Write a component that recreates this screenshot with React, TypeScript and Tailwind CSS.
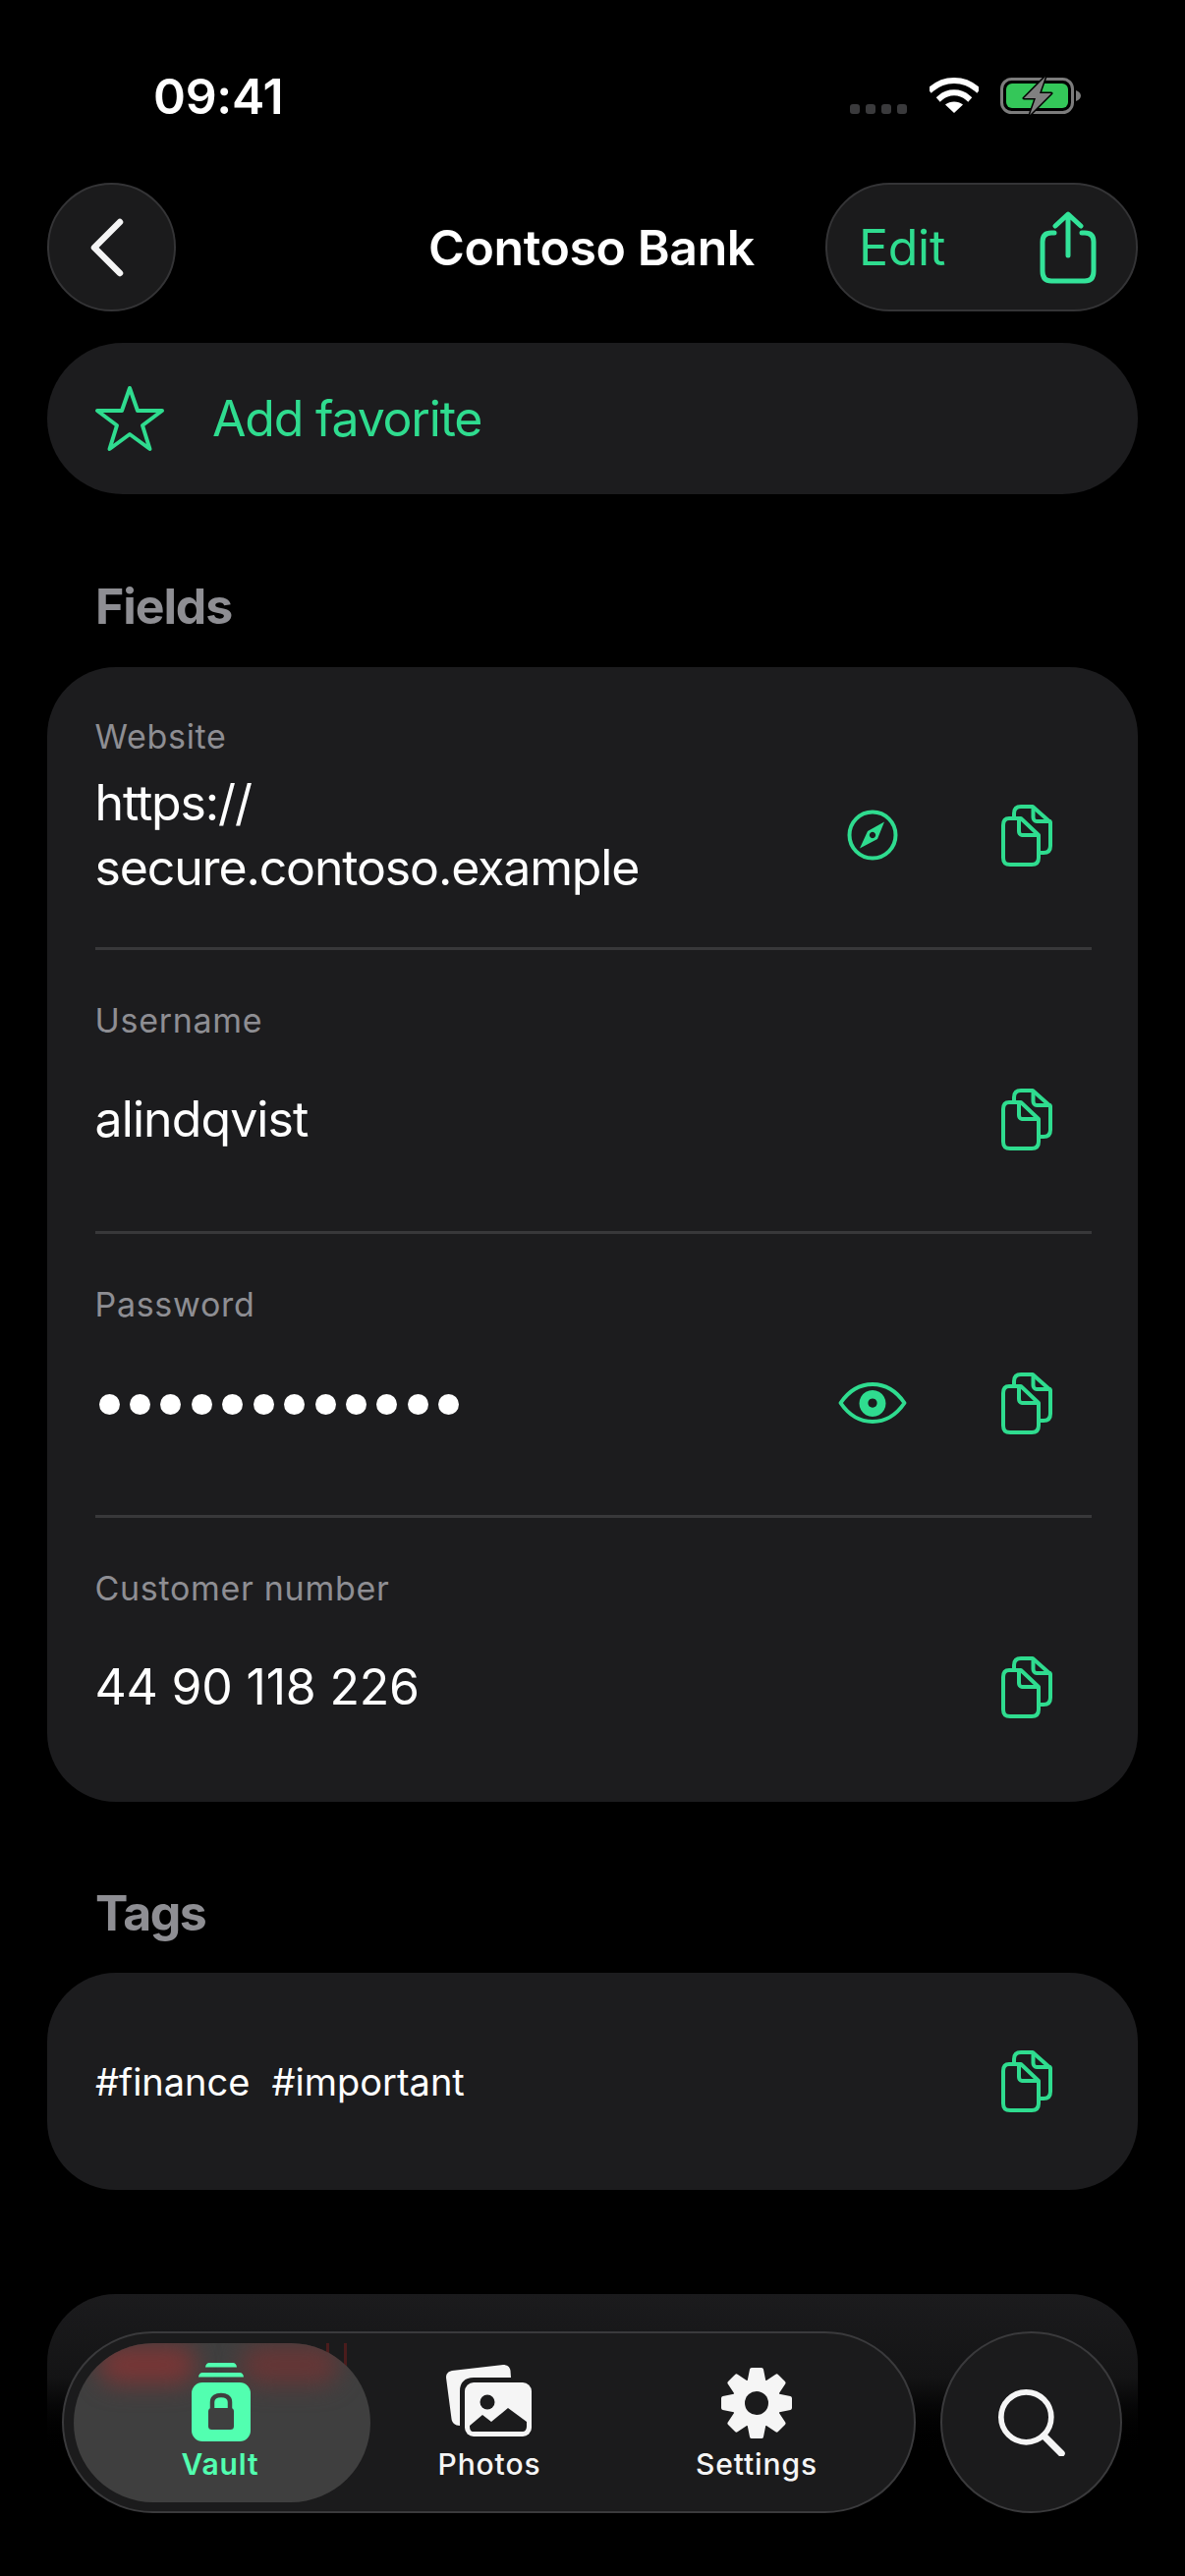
const accent = "#2fdc8f";

const CopyIcon = () => (
  <svg width="52" height="63" viewBox="0 0 52 63" fill="none" stroke="#2fdc8f" strokeWidth="4" strokeLinejoin="round" strokeLinecap="round">
    <path d="M13 13V9C13 4 16 2 20 2H32L50 18V42C50 47 47 49 43 49H38" />
    <path d="M32.500 3V13C32.500 15 34 17 36 17H49.500" />
    <path d="M8 14H20L38 31V54C38 59 35 61 31 61H9C4 61 2 59 2 54V21C2 16 4 14 8 14Z" />
    <path d="M18 14.500V27C18 29 19 31 21 31H37" />
  </svg>
);

const CompassIcon = () => (
  <svg width="52" height="52" viewBox="0 0 52 52" fill="none">
    <circle cx="26" cy="26" r="23.500" stroke="#2fdc8f" strokeWidth="4" />
    <path fillRule="evenodd" fill="#2fdc8f" d="M38 12.500L31 30L13 39.500L21 22ZM26 22.800a3.200 3.200 0 1 0 0.010 0Z" />
  </svg>
);

const EyeIcon = () => (
  <svg width="70" height="44" viewBox="0 0 70 44" fill="none">
    <path d="M2.500 22C11 9.500 22 3 35 3S59 9.500 67.500 22C59 34.500 48 41 35 41S11 34.500 2.500 22Z" stroke="#2fdc8f" strokeWidth="4" strokeLinejoin="round" />
    <path fillRule="evenodd" fill="#2fdc8f" d="M35 9a13.500 13.500 0 1 1 -0.010 0ZM35 17.500a4.600 4.600 0 1 0 0.010 0Z" />
  </svg>
);

const Row = ({ label, children, icon, last }: { label: string; children: React.ReactNode; icon?: React.ReactNode; last?: boolean }) => (
  <div className={`h-[289px] pt-[49.500px] ${last ? "" : "border-b-[3px] border-[#38383a]"}`}>
    <div className="text-[34px] leading-[46px] text-[#8e8e93] tracking-[0.700px]">{label}</div>
    <div className="h-[154px] flex items-center">
      <div className="flex-1 text-[50px] leading-[66px] text-white tracking-[-1.150px]">{children}</div>
      {icon && <div className="w-[70px] flex justify-center mr-[96px]">{icon}</div>}
      <div className="mr-[40px] flex"><CopyIcon /></div>
    </div>
  </div>
);

const App = () => {
  return (
    <div className="relative w-[1206px] h-[2622px] bg-black overflow-hidden font-['Inter',sans-serif]">
      {/* status bar */}
      <div className="h-[186px] pt-[71px] pl-[156px] pr-[106px] flex items-start justify-between">
        <span className="text-[50px] leading-[54px] font-semibold text-white tracking-[-0.300px]">09:41</span>
        <div className="flex items-start pt-[7px]">
          <div className="flex gap-[6px] mt-[28px] mr-[23px]">
            <div className="w-[10px] h-[10px] rounded-[3px] bg-[#3a3a3c]" />
            <div className="w-[10px] h-[10px] rounded-[3px] bg-[#3a3a3c]" />
            <div className="w-[10px] h-[10px] rounded-[3px] bg-[#3a3a3c]" />
            <div className="w-[10px] h-[10px] rounded-[3px] bg-[#3a3a3c]" />
          </div>
          <svg width="50" height="37" viewBox="0 0 50 37" fill="none" className="mr-[22px]">
            <path d="M2 12.500C15 1 35 1 48 12.500" stroke="#fff" strokeWidth="6" strokeLinecap="square" />
            <path d="M11 21.500C19 14.500 31 14.500 39 21.500" stroke="#fff" strokeWidth="6" strokeLinecap="square" />
            <path d="M25 37L16 28.500C21 24.500 29 24.500 34 28.500Z" fill="#fff" />
          </svg>
          <svg width="82" height="39" viewBox="0 0 82 39" fill="none">
            <rect x="1.500" y="2.500" width="72" height="34" rx="10" stroke="#7c7c7c" strokeWidth="3" />
            <rect x="6" y="7" width="63" height="25" rx="6" fill="#34c759" />
            <path d="M77 14C80 15 82 17 82 19.500C82 22 80 24 77 25Z" fill="#7c7c7c" />
            <path d="M46 0L24 22H36L30 39L52 17H40Z" fill="#808080" stroke="#000" strokeWidth="3" strokeLinejoin="round" paintOrder="stroke" />
          </svg>
        </div>
      </div>

      <div className="px-[48px]">
        {/* nav */}
        <div className="relative flex items-center justify-between h-[131px]">
          <button className="w-[131px] h-[131px] rounded-full bg-[#1b1b1c] border-2 border-[#343436] flex items-center justify-center">
            <svg width="38" height="60" viewBox="0 0 38 60" fill="none" className="mr-[10px]">
              <path d="M32 4L6 30L32 56" stroke="#f5f5f5" strokeWidth="6.500" strokeLinecap="round" strokeLinejoin="round" />
            </svg>
          </button>
          <span className="absolute left-[388px] text-[50px] leading-[60px] font-semibold text-white tracking-[-0.400px]">Contoso Bank</span>
          <div className="w-[318px] h-[131px] rounded-full bg-[#1b1b1c] border-2 border-[#343436] flex items-center justify-between pl-[32px] pr-[40px]">
            <span className="text-[50px] leading-[60px] text-[#2fdc8f] tracking-[-0.300px]">Edit</span>
            <svg width="58" height="74" viewBox="0 0 58 74" fill="none" stroke="#33e399" strokeWidth="5" strokeLinecap="round" strokeLinejoin="round">
              <path d="M29 45V4M16 15L29 3L42 15" />
              <path d="M15 22H12C6 22 3 25 3 31V61C3 68 6 71 12 71H46C52 71 55 68 55 61V31C55 25 52 22 46 22H43" />
            </svg>
          </div>
        </div>

        {/* favorite */}
        <div className="mt-[32px] h-[154px] rounded-[77px] bg-[#1c1c1e] flex items-center pl-[48px]">
          <svg width="72" height="68" viewBox="0 0 72 68" fill="none">
            <path d="M36 3L44 26H69L49 41L56.500 65L36 50L15.500 65L23 41L3 26H28Z" stroke={accent} strokeWidth="4" strokeLinejoin="round" />
          </svg>
          <span className="ml-[48px] text-[50px] leading-[60px] text-[#2fdc8f] tracking-[-1.200px]">Add favorite</span>
        </div>

        {/* fields */}
        <div className="mt-[84px] ml-[49px] text-[50px] leading-[60px] font-bold text-[#8e8e93] tracking-[-1.100px]">Fields</div>
        <div className="mt-[32px] h-[1155px] rounded-[70px] bg-[#1c1c1e] pl-[48.500px] pr-[47px] flex flex-col">
          <div className="-mt-[1.500px]">
            <Row label="Website" icon={<CompassIcon />}>
              <div>https://</div>
              <div>secure.contoso.example</div>
            </Row>
            <Row label="Username"><span className="tracking-[-0.900px]">alindqvist</span></Row>
            <Row label="Password" icon={<EyeIcon />}>
              <div className="flex gap-[10.450px] pl-[4px] mt-[3px]">
                {[...Array(12)].map((_, index) => (
                  <div key={index} className="w-[21px] h-[21px] rounded-full bg-white" />
                ))}
              </div>
            </Row>
            <Row label="Customer number" last><span className="tracking-[-0.200px]">44 90 118 226</span></Row>
          </div>
        </div>

        {/* tags */}
        <div className="mt-[83px] ml-[49px] text-[50px] leading-[60px] font-bold text-[#8e8e93] tracking-[-1.500px]">Tags</div>
        <div className="mt-[31px] h-[221px] rounded-[70px] bg-[#1c1c1e] pl-[49px] pr-[87px] flex items-center justify-between">
          <span className="text-[38px] leading-[50px] text-white flex gap-[22px]">
            <span>#finance</span>
            <span>#important</span>
          </span>
          <CopyIcon />
        </div>

        {/* card sliding under the tab bar */}
        <div className="mt-[106px] h-[170px] rounded-t-[70px] bg-gradient-to-b from-[#1b1b1d] via-[#141415] to-black" />
      </div>

      {/* tab bar */}
      <div className="absolute left-[63px] top-[2373px] w-[869px] h-[185px] rounded-full bg-[#1b1b1c] border-2 border-[#3a3a3c] flex items-center">
        <div className="absolute left-[267px] top-[10px] w-[3px] h-[20px] bg-[#4a1c1c]" />
        <div className="absolute left-[285px] top-[10px] w-[3px] h-[26px] bg-[#4a1c1c]" />
        <div className="relative ml-[10px] w-[302px] h-[162px] rounded-full bg-[#3f3f3f] overflow-hidden">
          <div className="absolute left-[25px] top-[2px] w-[100px] h-[40px] rounded-full bg-[#783636] blur-[12px]" />
          <div className="absolute left-[170px] top-[2px] w-[100px] h-[40px] rounded-full bg-[#663636] blur-[12px]" />
          <svg width="62" height="80" viewBox="0 0 62 80" className="absolute left-[119px] top-[20px]">
            <path d="M15 4.500C15 2 17 0 19 0H43C45 0 47 2 47 4.500Z" fill="#52ffb0" />
            <path d="M8 14.500C8 12 10 10 12 10H50C52 10 54 12 54 14.500Z" fill="#52ffb0" />
            <rect x="1" y="20" width="60" height="60" rx="11" fill="#52ffb0" />
            <path d="M22 47V40C22 35 26 33 31 33S40 35 40 40V47" fill="none" stroke="#3f3f3f" strokeWidth="4.500" />
            <rect x="18" y="46" width="26" height="22" rx="3.500" fill="#3f3f3f" />
          </svg>
          <div className="absolute left-0 right-0 top-[103px] text-center text-[30px] leading-[40px] font-semibold text-[#52ffb0] tracking-[0.900px] pr-[4px]">Vault</div>
        </div>
        <div className="absolute left-[333px] top-[0px] w-[200px] h-full flex flex-col items-center">
          <svg width="88" height="73" viewBox="0 0 88 73" className="mt-[32px]">
            <path d="M6 6L58 0C62 0 65 2 65.500 6L66 13H28C19 13 14 18 14 27V62C9 62 6 59 5.500 55L0 13C0 9 2 7 6 6Z" fill="#f5f5f5" />
            <rect x="19" y="18" width="68" height="55" rx="9" fill="#f5f5f5" />
            <circle cx="42" cy="38" r="7.500" fill="#1b1b1c" />
            <path d="M24 62L37 51L46 58L63 44L82 58V63C82 66 80 68 78 68H28C25 68 24 66 24 62Z" fill="#1b1b1c" />
          </svg>
          <span className="mt-[8px] text-[30px] leading-[40px] font-medium text-[#f5f5f5] tracking-[0.900px]">Photos</span>
        </div>
        <div className="absolute left-[605px] top-[0px] w-[200px] h-full flex flex-col items-center">
          <svg width="74" height="74" viewBox="0 0 74 74" className="mt-[34px]">
            {[0, 45, 90, 135, 180, 225, 270, 315].map((angle) => (
              <path key={angle} d="M32 3H42L45 18H29Z" fill="#f5f5f5" stroke="#f5f5f5" strokeWidth="4" strokeLinejoin="round" transform={`rotate(${angle} 37 37)`} />
            ))}
            <circle cx="37" cy="37" r="25" fill="#f5f5f5" />
            <circle cx="37" cy="37" r="12" fill="#1b1b1c" />
          </svg>
          <span className="mt-[5px] text-[30px] leading-[40px] font-medium text-[#f5f5f5] tracking-[0.900px]">Settings</span>
        </div>
      </div>
      <div className="absolute left-[957px] top-[2373px] w-[185px] h-[185px] rounded-full bg-[#1b1b1c] border-2 border-[#3a3a3c] flex items-center justify-center">
        <svg width="68" height="68" viewBox="0 0 72 72" fill="none" stroke="#f5f5f5" strokeWidth="6" strokeLinecap="round">
          <circle cx="30" cy="30" r="27" />
          <path d="M49 50L68 69" strokeWidth="7.500" />
        </svg>
      </div>
    </div>
  );
};

export default App;
